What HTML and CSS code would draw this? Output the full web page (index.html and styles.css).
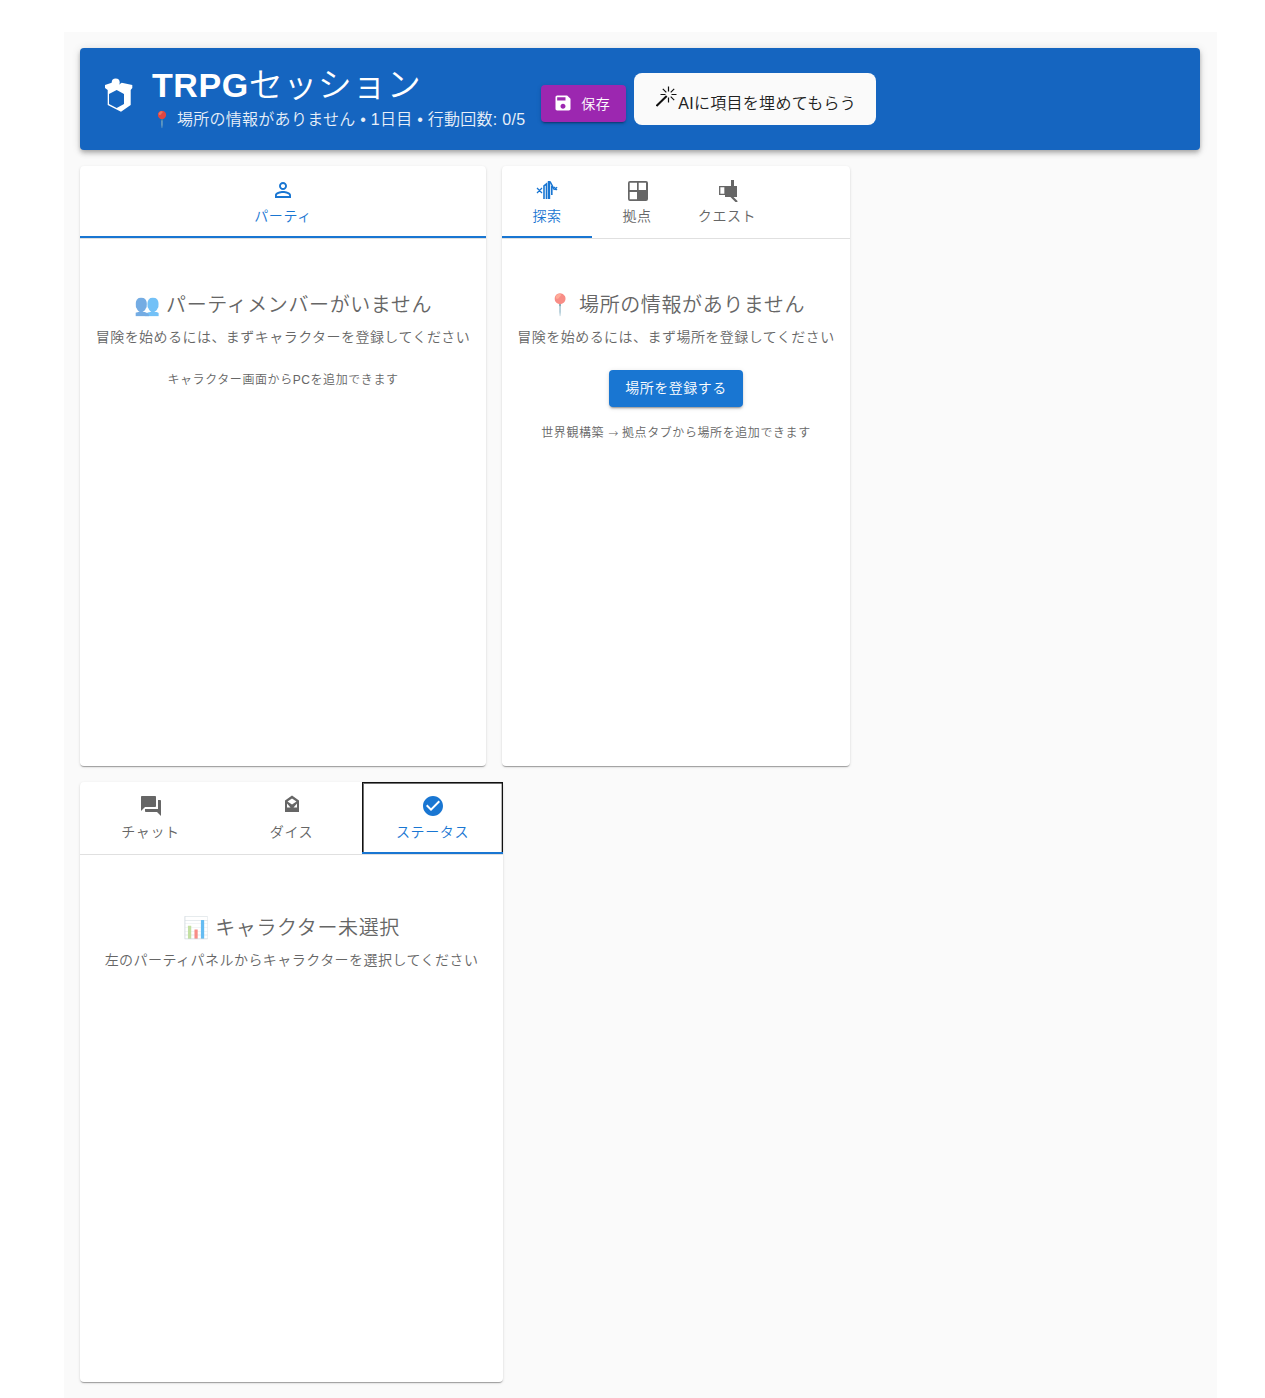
FILE: index.html

```html
<!DOCTYPE html>
<html lang="ja">
<head>
  <meta charset="UTF-8">
  <title>TRPGセッション</title>
  <link rel="stylesheet" href="styles.css">
</head>
<body>
  <div class="page">
    <header class="app-header">
      <svg class="logo" width="36" height="36" viewBox="0 0 36 36">
        <circle cx="14.700" cy="5.500" r="4" fill="#fff"/>
        <path fill="#fff" fill-rule="evenodd" d="M4 8 L10.700 5.700 Q14.700 11 20.700 5.700 L31.300 8 V11 L29.700 13 V28 L20 34.700 L6.700 28 V13 L4 11 Z M15.700 13 L8 17 V27 L15.700 31 L23 27 V17 Z"/>
      </svg>
      <div class="title-block">
        <h1 class="app-title"><b>TRPG</b>セッション</h1>
        <p class="app-sub">📍 場所の情報がありません • 1日目 • 行動回数: 0/5</p>
      </div>
      <button class="btn-save">
        <svg width="20" height="20" viewBox="0 0 24 24"><path fill="#fff" d="M17 3H5c-1.110 0-2 .9-2 2v14c0 1.100.89 2 2 2h14c1.100 0 2-.9 2-2V7l-4-4zm-5 16c-1.660 0-3-1.340-3-3s1.340-3 3-3 3 1.340 3 3-1.340 3-3 3zm3-10H5V5h10v4z"/></svg>
        保存
      </button>
      <button class="btn-ai">
        <svg class="wand" width="22" height="24" viewBox="0 0 22 24" fill="none" stroke="#111" stroke-width="1.200">
          <path d="M.5 21 L10.700 11" stroke-width="2"/>
          <path d="M12.500 1.500v5M12.500 12.500v5M4.500 9.500h5M15.500 9.500h5M6.800 3.800l3.500 3.500M14.700 11.700l3.500 3.500M18.200 3.800l-3.500 3.500"/>
        </svg>
        AIに項目を埋めてもらう
      </button>
    </header>

    <div class="panels">
      <section class="card card-party">
        <div class="tabs">
          <div class="tab active">
            <svg width="24" height="24" viewBox="0 0 24 24"><path fill="currentColor" d="M12 5.900c1.160 0 2.100.94 2.100 2.100s-.94 2.100-2.100 2.100S9.900 9.160 9.900 8s.94-2.100 2.100-2.100m0 9c2.970 0 6.100 1.460 6.100 2.100v1.100H5.900V17c0-.64 3.130-2.100 6.100-2.100M12 4C9.790 4 8 5.790 8 8s1.790 4 4 4 4-1.790 4-4-1.790-4-4-4zm0 9c-2.670 0-8 1.340-8 4v3h16v-3c0-2.660-5.330-4-8-4z"/></svg>
            <span>パーティ</span>
          </div>
        </div>
        <div class="empty">
          <h2><span class="emoji">👥</span> パーティメンバーがいません</h2>
          <p>冒険を始めるには、まずキャラクターを登録してください</p>
          <small>キャラクター画面からPCを追加できます</small>
        </div>
      </section>

      <section class="card card-world">
        <div class="tabs">
          <div class="tab active">
            <svg width="24" height="24" viewBox="0 0 24 24" fill="none" stroke="currentColor"><path stroke-width="1.600" d="M9 21V8l2.500-2V21M11.500 21"/><path stroke-width="2.400" d="M14 21V3"/><path stroke-width="1.600" d="M15 3.500L19.500 12M16.800 8v9"/><path stroke-width="1.300" d="M2 10l5 5M2 15l5-5M19 9l3 3M22 9l-2 3"/></svg>
            <span>探索</span>
          </div>
          <div class="tab">
            <svg width="24" height="24" viewBox="0 0 24 24"><path fill="currentColor" fill-rule="evenodd" d="M5 3h16a2 2 0 0 1 2 2v16a2 2 0 0 1-2 2H5a2 2 0 0 1-2-2V5a2 2 0 0 1 2-2zM4.700 4.700V12H12V4.700zM13.700 4.700V12H21V4.700zM4.700 14V21.300H12V14z"/></svg>
            <span>拠点</span>
          </div>
          <div class="tab">
            <svg width="24" height="24" viewBox="0 0 24 24"><path fill="currentColor" d="M16 2h3v6h3v11H10V8h6z"/><path fill="none" stroke="currentColor" stroke-width="1.300" d="M4.700 8.700H10v7.600H4.700z"/><path stroke="currentColor" stroke-width="2.200" d="M16 18l6 6"/></svg>
            <span>クエスト</span>
          </div>
        </div>
        <div class="empty">
          <h2><span class="emoji">📍</span> 場所の情報がありません</h2>
          <p>冒険を始めるには、まず場所を登録してください</p>
          <button class="btn-primary">場所を登録する</button>
          <small>世界観構築 <span class="arrow">→</span> 拠点タブから場所を追加できます</small>
        </div>
      </section>

      <section class="card card-session">
        <div class="tabs">
          <div class="tab">
            <svg width="24" height="24" viewBox="0 0 24 24"><path fill="currentColor" d="M21 6h-2v9H6v2c0 .55.45 1 1 1h11l4 4V7c0-.55-.45-1-1-1zm-4 6V3c0-.55-.45-1-1-1H3c-.55 0-1 .45-1 1v14l4-4h10c.55 0 1-.45 1-1z"/></svg>
            <span>チャット</span>
          </div>
          <div class="tab">
            <svg width="24" height="24" viewBox="0 0 24 24"><path fill="currentColor" fill-rule="evenodd" d="M12 1.500L19 6.500V18H5V6.500zM12 4.500L7.500 7.500 12 10.500 16.500 7.500zM7 9.500V13.500H10.500zM17 9.500V13.500H13.500z"/></svg>
            <span>ダイス</span>
          </div>
          <div class="tab active focused">
            <svg width="24" height="24" viewBox="0 0 24 24"><path fill="currentColor" d="M12 2C6.480 2 2 6.480 2 12s4.480 10 10 10 10-4.480 10-10S17.520 2 12 2zm-2 15l-5-5 1.410-1.410L10 14.170l7.590-7.590L19 8l-9 9z"/></svg>
            <span>ステータス</span>
          </div>
        </div>
        <div class="empty">
          <h2><span class="emoji">📊</span> キャラクター未選択</h2>
          <p>左のパーティパネルからキャラクターを選択してください</p>
        </div>
      </section>
    </div>
  </div>
</body>
</html>
```

FILE: styles.css

```css
* {
  box-sizing: border-box;
}
body {
  margin: 0;
  background: #fff;
  font-family: "Liberation Sans", "Noto Sans CJK JP", sans-serif;
  font-weight: 350;
  color: #212121;
}
.page {
  width: 1153px;
  margin: 32px 0 0 64px;
  padding: 16px;
  background: #fafafa;
}
.app-header {
  width: 1120px;
  height: 102px;
  display: flex;
  align-items: center;
  padding: 0 24px 0 21px;
  background: #1565c0;
  color: #fff;
  border-radius: 4px;
  box-shadow: 0 2px 4px -1px rgba(0,0,0,.2), 0 4px 5px rgba(0,0,0,.14), 0 1px 10px rgba(0,0,0,.12);
}
.logo {
  margin: 0 15px 8px 0;
}
.title-block {
  margin: 0 16px 2px 0;
}
.app-title {
  margin: 0 0 2px;
  font-size: 34px;
  line-height: 42px;
  font-weight: 350;
  letter-spacing: .55px;
}
.app-title b {
  font-weight: 700;
}
.app-sub {
  margin: 0;
  font-size: 16px;
  line-height: 24px;
  letter-spacing: .27px;
  opacity: .9;
}
.btn-save {
  display: flex;
  align-items: center;
  gap: 8px;
  height: 37px;
  margin-top: 8px;
  padding: 0 16px 1px 12px;
  border: none;
  border-radius: 4px;
  background: #9c27b0;
  color: #fff;
  font: inherit;
  font-size: 14px;
  letter-spacing: .4px;
  box-shadow: 0 3px 1px -2px rgba(0,0,0,.2), 0 2px 2px rgba(0,0,0,.14), 0 1px 5px rgba(0,0,0,.12);
}
.btn-ai {
  display: flex;
  align-items: flex-end;
  height: 52px;
  margin-left: 8px;
  padding: 0 20px 11px 22px;
  border: none;
  border-radius: 8px;
  background: #fafafa;
  color: #212121;
  font: inherit;
  font-size: 16px;
  letter-spacing: .3px;
}
.wand {
  margin-bottom: 5px;
}
.panels {
  display: flex;
  flex-wrap: wrap;
  gap: 16px;
  margin-top: 16px;
}
.card {
  height: 600px;
  background: #fff;
  border-radius: 4px;
  box-shadow: 0 2px 1px -1px rgba(0,0,0,.2), 0 1px 1px rgba(0,0,0,.14), 0 1px 3px rgba(0,0,0,.12);
}
.card-party {
  width: 406px;
}
.card-world {
  width: 348px;
  margin-right: 200px;
}
.card-session {
  width: 423px;
}
.tabs {
  display: flex;
  height: 73px;
  border-bottom: 1px solid #e0e0e0;
}
.tab {
  display: flex;
  flex-direction: column;
  align-items: center;
  justify-content: center;
  gap: 3px;
  height: 72px;
  padding-bottom: 2px;
  color: #666;
  font-size: 14px;
  letter-spacing: .6px;
}
.tab.active {
  color: #1976d2;
  box-shadow: inset 0 -2px 0 #1976d2;
}
.tab.focused {
  box-shadow: inset 0 -2px 0 #1976d2, inset 1px 1px 0 #111, inset -1px 0 0 #111, inset 2px 2px 0 rgba(17,17,17,.6), inset -2px 0 0 rgba(17,17,17,.3);
}
.card-party .tab,
.card-session .tab {
  flex: 1;
}
.card-world .tab {
  width: 90px;
}
.empty {
  padding: 50px 8px 0;
  text-align: center;
  color: #666;
}
.card-session .empty {
  padding-top: 57px;
}
.empty h2 {
  margin: 0 0 6px;
  font-size: 20px;
  line-height: 32px;
  font-weight: 350;
  letter-spacing: .6px;
}
.emoji {
  font-size: 21px;
  letter-spacing: 0;
  opacity: .6;
}
.empty p {
  margin: 0;
  font-size: 14px;
  line-height: 20px;
  letter-spacing: .46px;
}
.empty small {
  display: block;
  margin-top: 23px;
  font-size: 12px;
  line-height: 20px;
  letter-spacing: .58px;
}
.arrow {
  font-family: "DejaVu Sans", sans-serif;
  letter-spacing: 0;
}
.btn-primary {
  display: block;
  height: 37px;
  margin: 23px auto 0;
  padding: 0 16.500px 3px;
  border: none;
  border-radius: 4px;
  background: #1976d2;
  color: #fff;
  font: inherit;
  font-size: 14px;
  letter-spacing: .5px;
  box-shadow: 0 3px 1px -2px rgba(0,0,0,.2), 0 2px 2px rgba(0,0,0,.14), 0 1px 5px rgba(0,0,0,.12);
}
.btn-primary + small {
  margin-top: 16px;
}
```
